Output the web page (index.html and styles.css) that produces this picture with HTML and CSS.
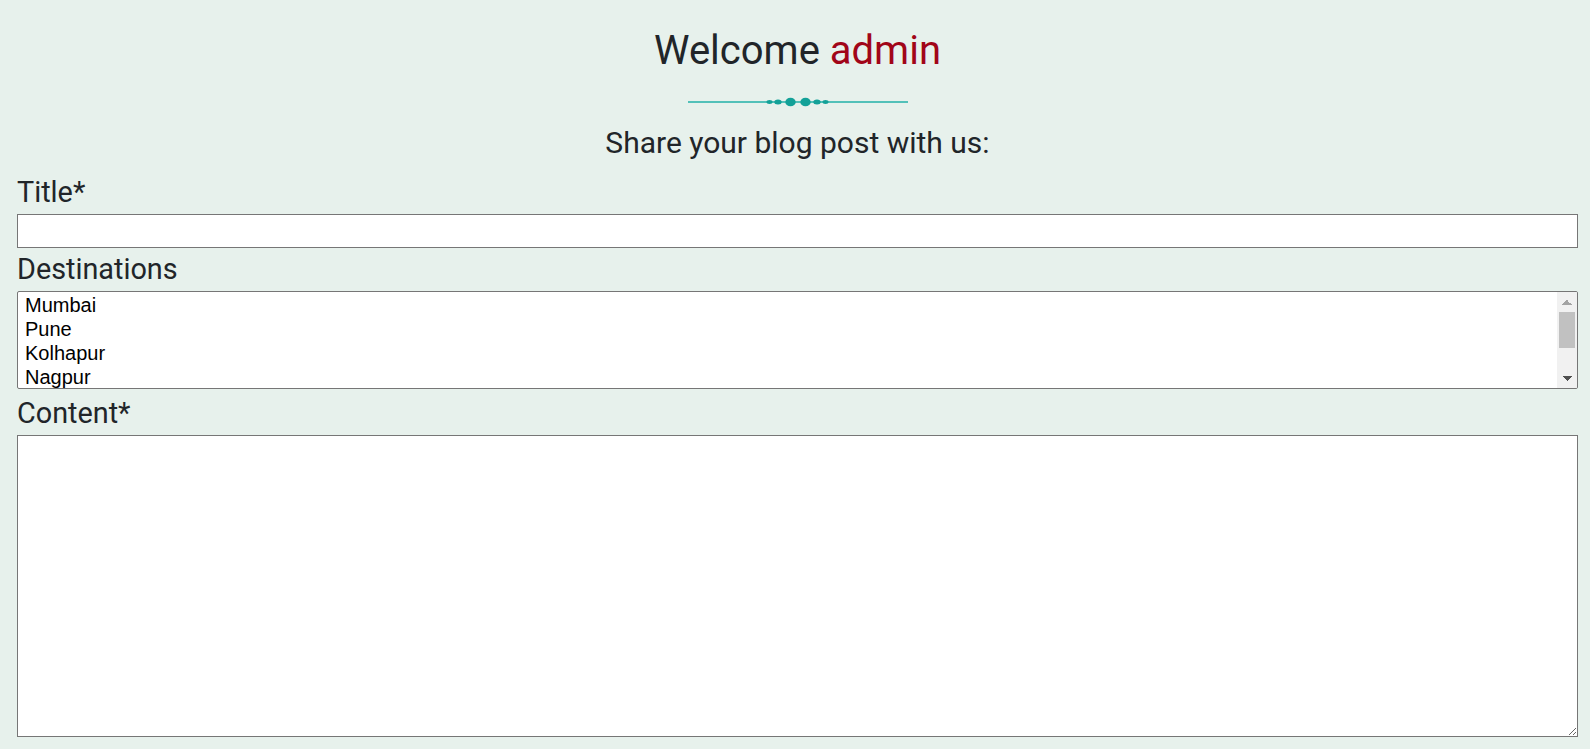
FILE: index.html
```html
<!DOCTYPE html>
<html lang="en">
<head>
<meta charset="utf-8">
<title>Share your blog post</title>
<link rel="stylesheet" href="styles.css">
</head>
<body>
<main class="page">
  <h1 class="welcome">Welcome <span class="user">admin</span></h1>
  <div class="divider">
    <svg width="220" height="14" viewBox="0 0 220 14" aria-hidden="true">
      <line x1="0" y1="7" x2="220" y2="7" stroke="#22b0a9" stroke-width="1.6"/>
      <ellipse cx="81.5" cy="7" rx="3" ry="1.9" fill="#13a198"/>
      <ellipse cx="90" cy="7" rx="3.7" ry="2.5" fill="#13a198"/>
      <ellipse cx="102.5" cy="7" rx="5.2" ry="4.3" fill="#13a198"/>
      <ellipse cx="117.5" cy="7" rx="5.2" ry="4.3" fill="#13a198"/>
      <ellipse cx="129" cy="7" rx="3.7" ry="2.5" fill="#13a198"/>
      <ellipse cx="137.5" cy="7" rx="3" ry="1.9" fill="#13a198"/>
    </svg>
  </div>
  <p class="subtitle">Share your blog post with us:</p>
  <form class="post-form">
    <label class="field-label" for="title">Title*</label>
    <input class="text-input" id="title" type="text">
    <label class="field-label" for="dest">Destinations</label>
    <div class="select-wrap">
      <select class="dest-select" id="dest" multiple>
        <option>Mumbai</option>
        <option>Pune</option>
        <option>Kolhapur</option>
        <option>Nagpur</option>
        <option>Nashik</option>
        <option>Aurangabad</option>
      </select>
      <div class="fake-scroll" aria-hidden="true">
        <span class="sb-btn sb-up"></span>
        <span class="sb-track"><span class="sb-thumb"></span></span>
        <span class="sb-btn sb-down"></span>
      </div>
    </div>
    <label class="field-label" for="content">Content*</label>
    <textarea class="content-area" id="content"></textarea>
  </form>
</main>
</body>
</html>
```

FILE: styles.css
```css
html, body {
  margin: 0;
  padding: 0;
  background: #e7f1ec;
}

body {
  font-family: Roboto, "Liberation Sans", Arial, sans-serif;
  color: #212529;
}

.page {
  padding: 27px 12px 0 17px;
}

.welcome {
  margin: 0;
  font-size: 40px;
  line-height: 48px;
  font-weight: 400;
  text-align: center;
}

.user {
  color: #a10518;
}

.divider {
  display: flex;
  justify-content: center;
  margin-top: 20px;
  height: 14px;
}

.divider svg {
  display: block;
}

.subtitle {
  margin: 13px 0 0;
  font-size: 30px;
  line-height: 42px;
  text-align: center;
}

.post-form {
  margin-top: 7px;
  display: flex;
  flex-direction: column;
}

.field-label {
  display: block;
  font-size: 28.8px;
  line-height: 42px;
  margin-bottom: 1px;
}

.text-input {
  display: block;
  box-sizing: border-box;
  width: 100%;
  height: 34px;
  margin: 0;
  padding: 0 4px;
  border: 1px solid #767676;
  border-radius: 0;
  background: #fff;
}

.select-wrap {
  position: relative;
  margin: 0 0 3px;
}

.dest-select {
  display: block;
  box-sizing: border-box;
  width: 100%;
  height: 98px;
  margin: 0;
  padding: 2px 0 0;
  border: 1px solid #767676;
  border-radius: 2px;
  background: #fff;
  font-family: "Liberation Sans", Arial, sans-serif;
  font-size: 20px;
  color: #000;
  overflow: hidden;
}

.dest-select option {
  padding: 0 5px 0 7px;
}

.fake-scroll {
  position: absolute;
  top: 1px;
  right: 1px;
  bottom: 1px;
  width: 20px;
  background: #f1f1f1;
  border-radius: 0 1px 1px 0;
  display: flex;
  flex-direction: column;
}

.sb-btn {
  display: block;
  height: 20px;
  flex: none;
  background-repeat: no-repeat;
  background-size: 5px 5px, 5px 5px;
  background-position: calc(50% - 2.5px) 50%, calc(50% + 2.5px) 50%;
}

.sb-up {
  background-image:
    linear-gradient(to bottom right, transparent 50%, #a3a3a3 50%),
    linear-gradient(to bottom left, transparent 50%, #a3a3a3 50%);
}

.sb-down {
  background-image:
    linear-gradient(to top right, transparent 50%, #505050 50%),
    linear-gradient(to top left, transparent 50%, #505050 50%);
}

.sb-track {
  display: block;
  flex: 1;
  padding: 0 2px;
}

.sb-thumb {
  display: block;
  height: 36px;
  background: #c1c1c1;
}

.content-area {
  display: block;
  box-sizing: border-box;
  width: 100%;
  height: 302px;
  margin: 0;
  padding: 2px;
  border: 1px solid #767676;
  border-radius: 0;
  background: #fff;
}
```
